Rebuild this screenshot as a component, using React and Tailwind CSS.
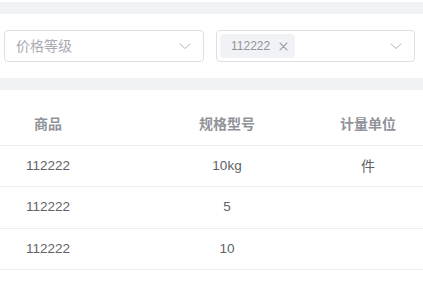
import React from "react";

const Chevron = () => (
  <svg width="12" height="12" viewBox="0 0 12 12" fill="none">
    <path d="M1 4 L6 8.5 L11 4" stroke="#b4b7bd" strokeWidth="1" strokeLinecap="round" strokeLinejoin="round" />
  </svg>
);

const Close = () => (
  <svg width="9" height="9" viewBox="0 0 9 9" fill="none">
    <path d="M1 1 L8 8 M8 1 L1 8" stroke="#a0a3a9" strokeWidth="1.1" strokeLinecap="round" />
  </svg>
);

const rows = [
  { a: "112222", b: "10kg", c: "件", h: "h-[41px]" },
  { a: "112222", b: "5", c: "", h: "h-[42px]" },
  { a: "112222", b: "10", c: "", h: "h-[41px]" },
];

export default function App() {
  return (
    <div
      className="w-[423px] h-[292px] bg-white overflow-hidden"
      style={{ fontFamily: '"Liberation Sans", "Noto Sans CJK SC", sans-serif' }}
    >
      <div className="h-[2px]" />
      <div className="h-[12px] bg-[#f0f2f5]" />
      <div className="flex gap-[12px] pl-[4px] pt-[16px] pb-[16px]">
        <div className="w-[200px] h-[32px] border border-[#dcdfe6] rounded-[4px] flex items-center justify-between pl-[11px] pr-[12px]">
          <span className="text-[14px] text-[#a8abb2]">价格等级</span>
          <Chevron />
        </div>
        <div className="w-[199px] h-[32px] border border-[#dcdfe6] rounded-[4px] flex items-center justify-between pl-[3px] pr-[12px]">
          <span className="h-[24px] w-[75px] bg-[#f0f2f5] rounded-[4px] flex items-center pl-[11px] gap-[9px] text-[12px] text-[#909399]">
            <span>112222</span>
            <Close />
          </span>
          <Chevron />
        </div>
      </div>
      <div className="h-[12px] bg-[#f0f2f5]" />
      <div className="mt-[14px]">
        <div className="flex h-[42px] items-center border-b border-[#ebeef5] text-[14px] font-bold text-[#909399]">
          <div className="w-[96px] text-center">商品</div>
          <div className="w-[36px]" />
          <div className="w-[190px] text-center">规格型号</div>
          <div className="w-[92px] text-center">计量单位</div>
        </div>
        {rows.map((r, i) => (
          <div key={i} className={`flex ${r.h} items-center border-b border-[#ebeef5] text-[#606266]`}>
            <div className="w-[96px] text-center text-[13.5px]">{r.a}</div>
            <div className="w-[36px]" />
            <div className="w-[190px] text-center text-[13.5px]">{r.b}</div>
            <div className="w-[92px] text-center text-[14px]">{r.c}</div>
          </div>
        ))}
      </div>
    </div>
  );
}
